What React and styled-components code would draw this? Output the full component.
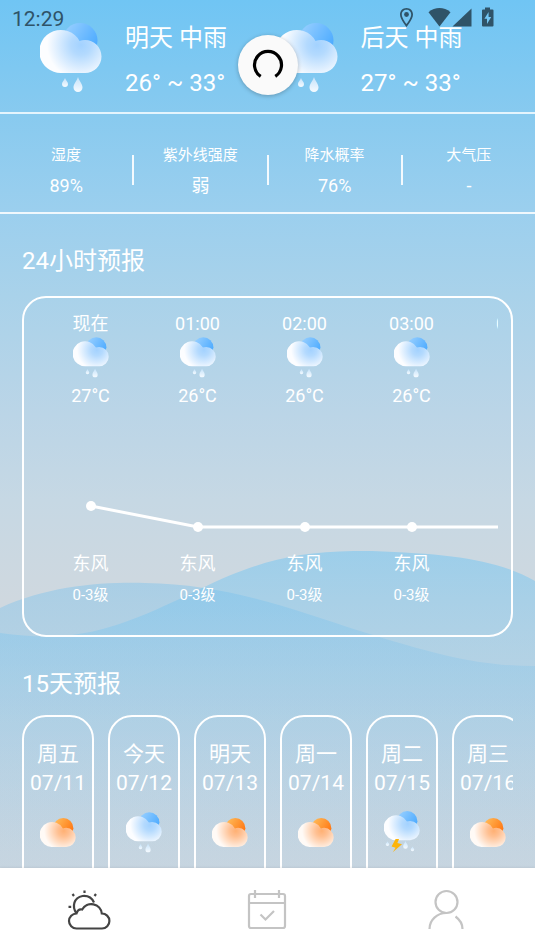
import React from 'react'
import styled, { createGlobalStyle } from 'styled-components'

const top = [
  { day: '明天', text: '中雨', temp: '26° ~ 33°' },
  { day: '后天', text: '中雨', temp: '27° ~ 33°' },
]

const stats = [
  { label: '湿度', value: '89%' },
  { label: '紫外线强度', value: '弱' },
  { label: '降水概率', value: '76%' },
  { label: '大气压', value: '-' },
]

const hours = [
  { time: '现在', temp: 27, wind: '东风', level: '0-3级' },
  { time: '01:00', temp: 26, wind: '东风', level: '0-3级' },
  { time: '02:00', temp: 26, wind: '东风', level: '0-3级' },
  { time: '03:00', temp: 26, wind: '东风', level: '0-3级' },
  { time: '04:00', temp: 26, wind: '东风', level: '0-3级' },
]

const days = [
  { name: '周五', date: '07/11', icon: 'sun' },
  { name: '今天', date: '07/12', icon: 'rain' },
  { name: '明天', date: '07/13', icon: 'sun' },
  { name: '周一', date: '07/14', icon: 'sun' },
  { name: '周二', date: '07/15', icon: 'thunder' },
  { name: '周三', date: '07/16', icon: 'sun' },
]

const HOUR_WIDTH = 107

const drop = (x, y, w, h) => {
  const r = w / 2
  return `M${x} ${y} C${x + r * 0.3} ${y + h * 0.3} ${x + r} ${y + h * 0.45} ${x + r} ${y + h - r} A${r} ${r} 0 0 1 ${x - r} ${y + h - r} C${x - r} ${y + h * 0.45} ${x - r * 0.3} ${y + h * 0.3} ${x} ${y} Z`
}

const WeatherIcon = ({ kind, width }) => {
  const warm = kind === 'sun'
  const h = warm ? 50 : kind === 'rain' ? 70 : 72
  const tone = warm ? 'warm' : 'cool'
  return (
    <svg width={width} height={Math.round((width * h) / 62)} viewBox={`0 0 62 ${h}`} aria-hidden="true">
      <circle cx="40" cy="17.5" r="17.5" fill={`url(#${tone}Back)`} />
      <path
        d="M21.5 50 A21.5 21.5 0 1 1 39.5 17.9 Q42 17 45 17 A16.5 16.5 0 0 1 45 50 Z"
        fill={`url(#${tone}Front)`}
      />
      {kind === 'rain' && (
        <g fill="url(#drop)">
          <path d={drop(25, 55, 6, 9)} />
          <path d={drop(38, 54, 9, 15)} />
        </g>
      )}
      {kind === 'thunder' && (
        <>
          <g fill="url(#drop)">
            <path d={drop(6, 52, 6, 8)} />
            <path d={drop(37, 51, 8, 14)} />
            <path d={drop(49, 61, 6, 8)} />
          </g>
          <path d="M20 48 L13 61 L20 63 L15 71 L31 57 L23 55 L26 48 Z" fill="#fdb409" />
        </>
      )}
    </svg>
  )
}

// gradients shared by all the weather icons
const IconDefs = () => (
  <Defs width="0" height="0" aria-hidden="true">
    <defs>
      <linearGradient id="coolBack" x1="0" y1="0" x2="1" y2="0.6">
        <stop offset="0.2" stopColor="#8fcbff" />
        <stop offset="1" stopColor="#4dabff" />
      </linearGradient>
      <radialGradient id="coolFront" gradientUnits="userSpaceOnUse" cx="41" cy="22" r="34">
        <stop offset="0" stopColor="#a3d2ff" />
        <stop offset="0.3" stopColor="#b4dafe" />
        <stop offset="1" stopColor="#fcfdff" />
      </radialGradient>
      <linearGradient id="warmBack" x1="0" y1="0" x2="1" y2="0.6">
        <stop offset="0.2" stopColor="#ffb452" />
        <stop offset="1" stopColor="#ff7612" />
      </linearGradient>
      <radialGradient id="warmFront" gradientUnits="userSpaceOnUse" cx="41" cy="22" r="34">
        <stop offset="0" stopColor="#ffb073" />
        <stop offset="0.3" stopColor="#ffc092" />
        <stop offset="1" stopColor="#fffaf6" />
      </radialGradient>
      <linearGradient id="drop" x1="0" y1="0" x2="0" y2="1">
        <stop offset="0" stopColor="#c4e2fa" />
        <stop offset="1" stopColor="#f6fbff" />
      </linearGradient>
    </defs>
  </Defs>
)

const Waves = () => (
  <WaveSvg viewBox="0 0 535 320" preserveAspectRatio="none" aria-hidden="true">
    <defs>
      <linearGradient id="waveA" gradientUnits="userSpaceOnUse" x1="0" y1="0" x2="0" y2="320">
        <stop offset="0" stopColor="#72c5f2" stopOpacity="0.52" />
        <stop offset="1" stopColor="#b0d0e6" stopOpacity="0.15" />
      </linearGradient>
      <linearGradient id="waveB" gradientUnits="userSpaceOnUse" x1="0" y1="30" x2="0" y2="320">
        <stop offset="0" stopColor="#72c0ee" stopOpacity="0.4" />
        <stop offset="1" stopColor="#b0d0e6" stopOpacity="0.15" />
      </linearGradient>
    </defs>
    <path
      d="M0 82 C80 93 120 77 200 38 C260 9 300 -1 372 0 C450 3 496 8 535 30 L535 320 L0 320 Z"
      fill="url(#waveA)"
    />
    <path
      d="M0 57 C48 35 100 31 145 32 C225 33 290 57 360 80 C440 105 480 115 535 115 L535 320 L0 320 Z"
      fill="url(#waveB)"
    />
  </WaveSvg>
)

const TempChart = () => {
  const points = hours.map((h, i) => [i * HOUR_WIDTH + 54, 99 + (27 - h.temp) * 21])
  return (
    <svg width={hours.length * HOUR_WIDTH} height="146" aria-hidden="true">
      <polyline points={points.join(' ')} fill="none" stroke="#fff" strokeWidth="3" />
      {points.map(([x, y]) => (
        <circle key={x} cx={x} cy={y} r="5" fill="#fff" />
      ))}
    </svg>
  )
}

const App = () => {
  return (
    <Screen>
      <GlobalStyle />
      <IconDefs />
      <Waves />

      <StatusBar>
        <Clock>12:29</Clock>
        <svg width="96" height="22" viewBox="0 0 96 22" fill="#2f5368" aria-hidden="true">
          <path
            fillRule="evenodd"
            d="M7.500 2 C3.800 2 1 4.800 1 8.500 C1 13.200 7.500 21 7.500 21 C7.500 21 14 13.200 14 8.500 C14 4.800 11.200 2 7.500 2 Z M7.500 3.800 C10.200 3.800 12.200 5.900 12.200 8.500 C12.200 11.500 9 16 7.500 18.100 C6 16 2.800 11.500 2.800 8.500 C2.800 5.900 4.800 3.800 7.500 3.800 Z"
          />
          <circle cx="7.500" cy="8.500" r="2.400" />
          <path d="M29.500 6.200 C36 0.600 45 0.600 51.500 6.200 L40.500 20.500 Z" />
          <path d="M72.500 2.500 V20.500 H53.500 Z" />
          <path
            fillRule="evenodd"
            d="M86 1.500 H91 V3.500 H93.500 Q94.500 3.500 94.500 4.500 V19.500 Q94.500 20.500 93.500 20.500 H84 Q83 20.500 83 19.500 V4.500 Q83 3.500 84 3.500 H86 Z M89.600 6 L85.400 12.800 H88 V18 L92.200 11 H89.600 Z"
          />
        </svg>
      </StatusBar>

      <Refresh role="status" aria-label="加载中">
        <svg width="32" height="32" viewBox="0 0 32 32" aria-hidden="true">
          <path d="M8.700 27.300 A13.500 13.500 0 1 1 23.300 27.300" fill="none" stroke="#000" strokeWidth="3.200" />
        </svg>
      </Refresh>

      <Content>
        <TopRow>
          {top.map((t) => (
            <TopItem key={t.day}>
              <WeatherIcon kind="rain" width={62} />
              <TopText>
                <span>{t.day} {t.text}</span>
                <span>{t.temp}</span>
              </TopText>
            </TopItem>
          ))}
        </TopRow>

        <Stats>
          {stats.map((s, i) => (
            <React.Fragment key={s.label}>
              {i > 0 && <Divider />}
              <Stat>
                <StatLabel>{s.label}</StatLabel>
                <StatValue>{s.value}</StatValue>
              </Stat>
            </React.Fragment>
          ))}
        </Stats>

        <Section $gap={18}>
          <Title>24小时预报</Title>
          <HourCard>
            <HourScroll>
              <HourRow>
                {hours.map((h) => (
                  <Hour key={h.time}>
                    <span>{h.time}</span>
                    <HourIcon>
                      <WeatherIcon kind="rain" width={36} />
                    </HourIcon>
                    <span>{h.temp}°C</span>
                  </Hour>
                ))}
              </HourRow>
              <TempChart />
              <HourRow>
                {hours.map((h) => (
                  <Hour key={h.time}>
                    <span>{h.wind}</span>
                    <Level>{h.level}</Level>
                  </Hour>
                ))}
              </HourRow>
            </HourScroll>
          </HourCard>
        </Section>

        <Section $gap={14}>
          <Title>15天预报</Title>
          <DayRow>
            {days.map((d) => (
              <Day key={d.date}>
                <span>{d.name}</span>
                <span>{d.date}</span>
                <DayIcon>
                  <WeatherIcon kind={d.icon} width={36} />
                </DayIcon>
              </Day>
            ))}
          </DayRow>
        </Section>
      </Content>

      <TabBar>
        <Tab $active aria-label="天气">
          <svg width="44" height="42" viewBox="0 0 44 42">
            <path d="M9.500 39.500 H35 A7.500 7.500 0 0 0 34.800 24.500 A10.500 10.500 0 0 0 15.200 20.500 Q11 19.500 9.500 24.500 A7.500 7.500 0 0 0 9.500 39.500 Z" />
            <path d="M9.500 24.500 C4.500 17.500 7 8.500 15.500 7 C20.500 6.500 25 9 27 13.500" />
            <path d="M17.500 1.500 V4 M5.500 5 L7 7 M29 5 L27.500 7 M1.500 17.800 H4.200" />
          </svg>
        </Tab>
        <Tab aria-label="日历">
          <svg width="44" height="42" viewBox="0 0 44 42">
            <rect x="4" y="5" width="36" height="34" rx="2" />
            <path d="M4 14 H40 M10 1 V9 M34 1 V9 M15.500 25.500 L20.500 30.500 L29 22" />
          </svg>
        </Tab>
        <Tab aria-label="我的">
          <svg width="44" height="42" viewBox="0 0 44 42">
            <circle cx="22.500" cy="13" r="11" />
            <path d="M5.500 40 C5.500 31 13 24 22.500 24 M31.500 27.500 C35.500 30.500 38.500 35 38.500 40" />
          </svg>
        </Tab>
      </TabBar>
    </Screen>
  )
}

export default App

const GlobalStyle = createGlobalStyle`
* {
    box-sizing: border-box;
}
body {
    margin: 0;
    font-family: Roboto, "Noto Sans CJK SC", sans-serif;
}
svg {
    display: block;
    flex-shrink: 0;
}
`

const Screen = styled.div`
position: relative;
display: flex;
flex-direction: column;
height: 100vh;
overflow: hidden;
color: #fff;
background: linear-gradient(#70c5f4 0px, #88caef 115px, #9bcfee 210px, #a9d2ea 295px, #bbd5e7 415px, #c6d8e4 500px, #cfd8df 600px, #d0d7de 870px);
`

const Defs = styled.svg`
position: absolute;
`

const WaveSvg = styled.svg`
position: absolute;
top: 551px;
left: 0;
width: 100%;
height: 320px;
`

const StatusBar = styled.div`
position: absolute;
top: 6px;
left: 12px;
right: 40px;
z-index: 2;
display: flex;
justify-content: space-between;
color: #2f5368;
`

const Clock = styled.span`
font-size: 21px;
line-height: 26px;
`

const Refresh = styled.div`
position: absolute;
top: 35px;
left: 50%;
z-index: 2;
display: flex;
align-items: center;
justify-content: center;
width: 60px;
height: 60px;
margin-left: -30px;
border-radius: 50%;
background: #fafafa;
box-shadow: 0 1px 4px rgba(0, 0, 0, 0.25);
`

const Content = styled.main`
position: relative;
flex: 1;
min-height: 0;
overflow-y: auto;
scrollbar-width: none;
`

const TopRow = styled.div`
display: grid;
grid-template-columns: 1fr 1fr;
padding: 23px 24px 14px 40px;
border-bottom: 2px solid #e4f4fd;
`

const TopItem = styled.div`
display: flex;
gap: 23px;
`

const TopText = styled.div`
display: flex;
flex-direction: column;
gap: 15px;
font-size: 24px;
line-height: 30px;
white-space: nowrap;
`

const Stats = styled.div`
display: flex;
padding: 30px 0 14px;
border-bottom: 2px solid #f0f8fd;
`

const Stat = styled.div`
display: flex;
flex: 1;
flex-direction: column;
align-items: center;
gap: 8px;
`

const StatLabel = styled.span`
font-size: 15px;
line-height: 22px;
`

const StatValue = styled.span`
font-size: 18px;
line-height: 24px;
`

const Divider = styled.div`
width: 2px;
height: 30px;
margin-top: 11px;
background: #f4fafe;
`

const Section = styled.section`
display: flex;
flex-direction: column;
gap: ${(p) => p.$gap}px;
padding: 30px 22px 0;
`

const Title = styled.h2`
margin: 0;
font-size: 24px;
font-weight: 400;
line-height: 34px;
`

const HourCard = styled.div`
padding: 15px 13px 30px;
border: 2px solid #fff;
border-radius: 24px;
`

const HourScroll = styled.div`
overflow: hidden;
`

const HourRow = styled.div`
display: flex;
`

const Hour = styled.div`
display: flex;
flex: 0 0 ${HOUR_WIDTH}px;
flex-direction: column;
align-items: center;
font-size: 18px;
line-height: 22px;
`

const HourIcon = styled.div`
display: flex;
height: 50px;
padding-top: 2px;
`

const Level = styled.span`
margin-top: 10px;
font-size: 15px;
line-height: 20px;
`

const DayRow = styled.div`
display: flex;
gap: 14px;
overflow: hidden;
`

const Day = styled.div`
display: flex;
flex: 0 0 72px;
flex-direction: column;
align-items: center;
height: 330px;
padding-top: 23px;
border: 2px solid #fff;
border-radius: 24px;
font-size: 21px;
line-height: 29px;
white-space: nowrap;
`

const DayIcon = styled.div`
display: flex;
align-items: center;
height: 42px;
margin-top: 13px;
`

const TabBar = styled.nav`
position: relative;
display: flex;
flex-shrink: 0;
height: 83px;
background: #fff;
box-shadow: 0 -1px 2px rgba(0, 0, 0, 0.06);
`

const Tab = styled.button`
display: flex;
flex: 1;
align-items: center;
justify-content: center;
padding: 0;
border: 0;
background: none;
color: ${(p) => (p.$active ? '#444' : '#c4c4c4')};
cursor: pointer;

svg {
    fill: none;
    stroke: currentColor;
    stroke-width: 2.2;
}
`
